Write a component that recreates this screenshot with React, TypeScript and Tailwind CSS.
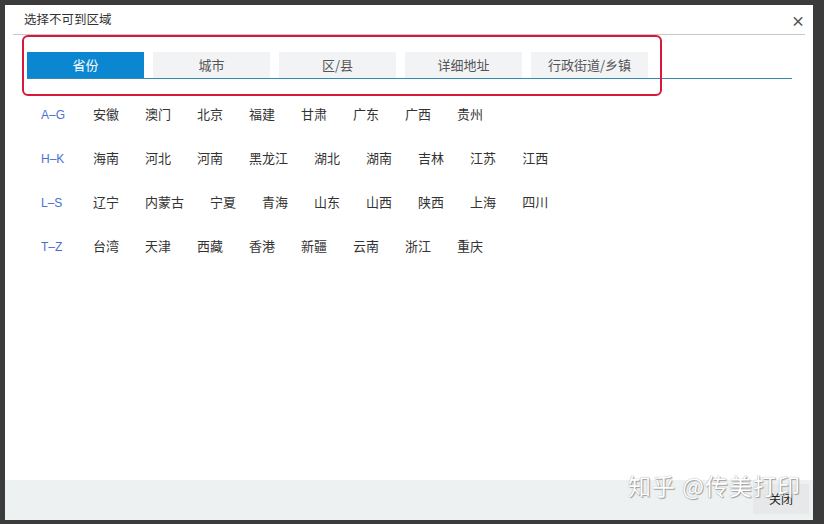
const groups: { label: string; items: string[] }[] = [
  { label: 'A–G', items: ['安徽', '澳门', '北京', '福建', '甘肃', '广东', '广西', '贵州'] },
  { label: 'H–K', items: ['海南', '河北', '河南', '黑龙江', '湖北', '湖南', '吉林', '江苏', '江西'] },
  { label: 'L–S', items: ['辽宁', '内蒙古', '宁夏', '青海', '山东', '山西', '陕西', '上海', '四川'] },
  { label: 'T–Z', items: ['台湾', '天津', '西藏', '香港', '新疆', '云南', '浙江', '重庆'] },
];

const tabs = ['省份', '城市', '区/县', '详细地址', '行政街道/乡镇'];

export default function App() {
  return (
    <div
      className="w-[824px] h-[524px] bg-[#3b3b3b] pt-[5px] pl-[5px] overflow-hidden"
      style={{ fontFamily: '"Noto Sans CJK SC", "Noto Sans", sans-serif' }}
    >
      <div className="relative w-[808px] h-[515px] bg-white flex flex-col">
        {/* header */}
        <div className="h-[29px] flex items-center justify-between pl-[19px] pr-[8px]">
          <span className="text-[12.5px] text-[#333]">选择不可到区域</span>
          <span className="text-[14px] leading-none font-bold text-[#555]">×</span>
        </div>
        <div className="mx-[8px] h-px bg-[#c8c8c8]" />

        {/* tabs */}
        <div className="mt-[17px] ml-[22px] mr-[21px] flex gap-[9px] border-b border-[#3589a9]">
          {tabs.map((t, i) => (
            <div
              key={t}
              className={`w-[117px] h-[26px] flex items-center justify-center text-[13px] ${
                i === 0 ? 'bg-[#0b87d1] text-white' : 'bg-[#f2f3f5] text-[#555]'
              }`}
            >
              {t}
            </div>
          ))}
        </div>

        {/* regions */}
        <div className="mt-[13px] ml-[36px] flex flex-col">
          {groups.map((g) => (
            <div key={g.label} className="h-[44px] flex items-center">
              <span
                className="w-[52px] pt-px text-[12px] text-[#4b6fcf]"
                style={{ fontFamily: '"Liberation Sans", Arial, sans-serif' }}
              >
                {g.label}
              </span>
              <div className="flex gap-[26px]">
                {g.items.map((it) => (
                  <span key={it} className="text-[13px] text-[#333]">
                    {it}
                  </span>
                ))}
              </div>
            </div>
          ))}
        </div>

        <div className="flex-1" />

        {/* footer */}
        <div className="relative h-[40px] bg-[#eef1f2] flex items-start justify-end pt-[4px] pr-[4px]">
          <button className="w-[56px] h-[30px] bg-[#e6e8e9] text-[12px] text-[#222] flex items-center justify-center">
            关闭
          </button>
        </div>

        {/* watermark over the footer */}
        <span className="absolute right-[12px] bottom-[20px] text-[23px] leading-[30px] text-white tracking-[1px] [text-shadow:0_0_1px_#8a8a8a,1px_1px_1px_#a0a0a0] pointer-events-none">
          知乎 @传美打印
        </span>

        {/* highlight annotation */}
        <div className="absolute left-[17px] top-[30px] w-[640px] h-[61px] border-2 border-[#d8173a] rounded-[6px] pointer-events-none" />
      </div>
    </div>
  );
}
